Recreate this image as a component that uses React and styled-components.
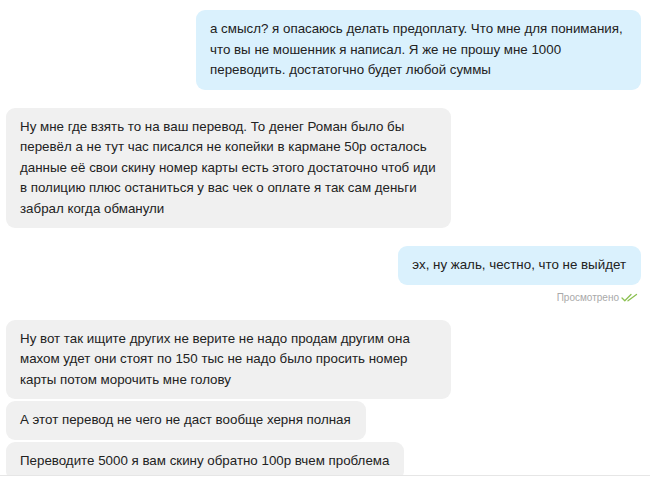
import React from 'react';
import styled, { createGlobalStyle } from 'styled-components';

const GlobalStyle = createGlobalStyle`
  html, body {
    margin: 0;
    padding: 0;
    background: #fff;
  }
  body {
    font-family: "Liberation Sans", Arial, sans-serif;
  }
`;

const Page = styled.div`
  width: 650px;
  height: 479px;
  overflow: hidden;
  background: #fff;
`;

const Chat = styled.div`
  height: 476px;
  box-sizing: border-box;
  overflow: hidden;
  padding: 10px 9px 0 6px;
  border-bottom: 1px solid #e6e6e6;
  display: flex;
  flex-direction: column;
`;

const Group = styled.div`
  display: flex;
  flex-direction: column;
  align-items: ${(p) => (p.$out ? 'flex-end' : 'flex-start')};
  gap: 2px;
  margin-bottom: ${(p) => p.$spacing || 18}px;
`;

const Bubble = styled.div`
  box-sizing: border-box;
  max-width: 445px;
  padding: 9px 15px 9px 14px;
  border-radius: 9px;
  background: ${(p) => (p.$out ? '#daf1fd' : '#f0f0f0')};
  color: #222;
  font-size: 13.33px;
  line-height: 20.5px;
`;

const Status = styled.div`
  display: flex;
  align-items: center;
  gap: 2px;
  margin-top: 4px;
  padding-right: 3px;
  font-size: 10px;
  line-height: 14px;
  color: #a9a9a9;
`;

const Ticks = () => (
  <svg width="17" height="9" viewBox="0 0 17 9" fill="none">
    <path d="M1 5 L3.8 7.8 L10 1.5" stroke="#8cc152" strokeWidth="1.3" strokeLinecap="round" strokeLinejoin="round" />
    <path d="M7 7.8 L15.5 1.5" stroke="#8cc152" strokeWidth="1.3" strokeLinecap="round" />
  </svg>
);

const messages = [
  {
    out: true,
    items: [
      'а смысл? я опасаюсь делать предоплату. Что мне для понимания, что вы не мошенник я написал. Я же не прошу мне 1000 переводить. достатогчно будет любой суммы',
    ],
  },
  {
    out: false,
    items: [
      'Ну мне где взять то на ваш перевод. То денег Роман было бы перевёл а не тут час писался не копейки в кармане 50р осталось данные её свои скину номер карты есть этого достаточно чтоб иди в полицию плюс останиться у вас чек о оплате я так сам деньги забрал когда обманули',
    ],
  },
  {
    out: true,
    seen: true,
    spacing: 15,
    items: ['эх, ну жаль, честно, что не выйдет'],
  },
  {
    out: false,
    items: [
      'Ну вот так ищите других не верите не надо продам другим она махом удет они стоят по 150 тыс не надо было просить номер карты потом морочить мне голову',
      'А этот перевод не чего не даст вообще херня полная',
      'Переводите 5000 я вам скину обратно 100р вчем проблема',
    ],
  },
];

export default function App() {
  return (
    <Page>
      <GlobalStyle />
      <Chat>
        {messages.map((m, i) => (
          <Group key={i} $out={m.out} $spacing={m.spacing}>
            {m.items.map((t, j) => (
              <Bubble key={j} $out={m.out}>
                {t}
              </Bubble>
            ))}
            {m.seen && (
              <Status>
                Просмотрено
                <Ticks />
              </Status>
            )}
          </Group>
        ))}
      </Chat>
    </Page>
  );
}
